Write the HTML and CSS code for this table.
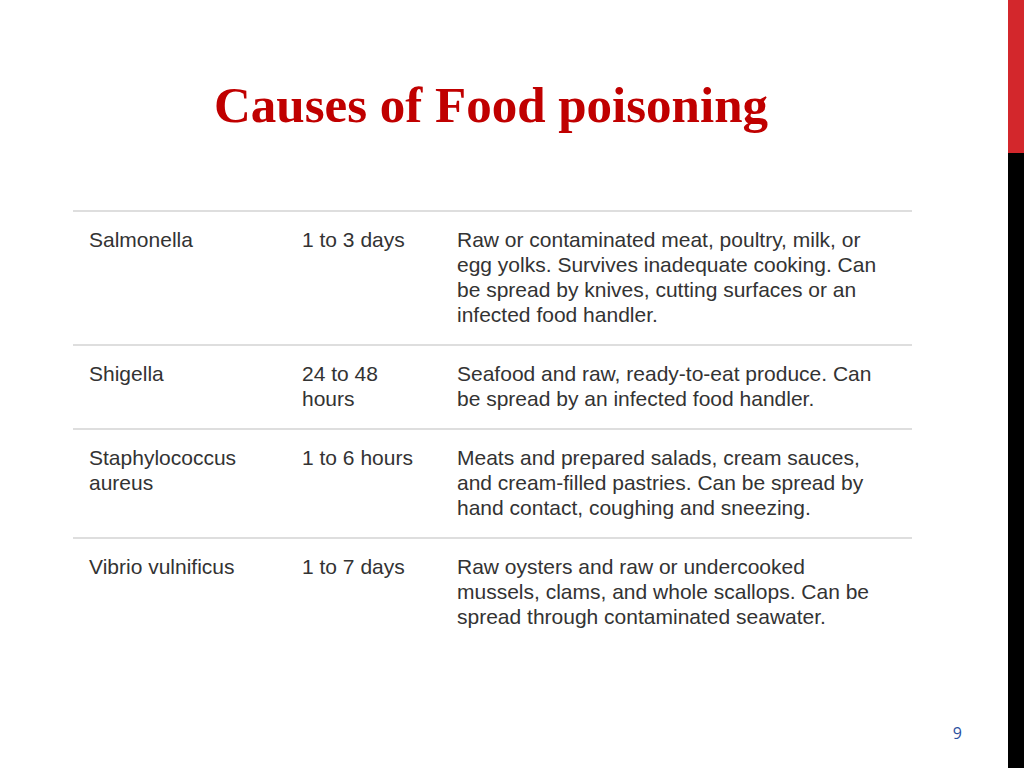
FILE: index.html
```
<!DOCTYPE html>
<html lang="en">
<head>
<meta charset="utf-8">
<title>Causes of Food poisoning</title>
<link rel="stylesheet" href="styles.css">
</head>
<body>
<div class="slide">
  <main class="content">
    <h1 class="title">Causes of Food poisoning</h1>
    <table class="causes">
      <tbody>
        <tr>
          <td class="c1">Salmonella</td>
          <td class="c2">1 to 3 days</td>
          <td class="c3">Raw or contaminated meat, poultry, milk, or egg yolks. Survives inadequate cooking. Can be spread by knives, cutting surfaces or an infected food handler.</td>
        </tr>
        <tr>
          <td class="c1">Shigella</td>
          <td class="c2">24 to 48 hours</td>
          <td class="c3">Seafood and raw, ready-to-eat produce. Can be spread by an infected food handler.</td>
        </tr>
        <tr>
          <td class="c1">Staphylococcus aureus</td>
          <td class="c2">1 to 6 hours</td>
          <td class="c3">Meats and prepared salads, cream sauces, and cream-filled pastries. Can be spread by hand contact, coughing and sneezing.</td>
        </tr>
        <tr class="last">
          <td class="c1">Vibrio vulnificus</td>
          <td class="c2">1 to 7 days</td>
          <td class="c3">Raw oysters and raw or undercooked mussels, clams, and whole scallops. Can be spread through contaminated seawater.</td>
        </tr>
      </tbody>
    </table>
    <div class="footer"><span class="page-num">9</span></div>
  </main>
  <aside class="edge">
    <div class="edge-red"></div>
    <div class="edge-black"></div>
  </aside>
</div>
</body>
</html>
```
FILE: styles.css
```
html, body {
  margin: 0;
  padding: 0;
  background: #ffffff;
}
.slide {
  width: 1024px;
  height: 768px;
  display: flex;
  overflow: hidden;
}
.content {
  flex: 1;
  display: flex;
  flex-direction: column;
  padding: 73px 0 0 73px;
}
.title {
  margin: 0;
  padding-right: 99px;
  text-align: center;
  font-family: "Liberation Serif", "Times New Roman", serif;
  font-weight: bold;
  font-size: 51px;
  line-height: 64px;
  color: #c00000;
  height: 64px;
}
.causes {
  margin-top: 73px;
  width: 839px;
  border-collapse: collapse;
  font-family: "Liberation Sans", Arial, sans-serif;
  font-size: 21px;
  line-height: 25px;
  color: #333333;
  table-layout: fixed;
}
.causes tr {
  border-top: 2px solid #dedede;
}
.causes td {
  vertical-align: top;
  padding: 15px 16px 17px 16px;
}
.causes td.c3 {
  padding-right: 20px;
}
.c1 { width: 181px; }
.c2 { width: 123px; }
.footer {
  flex: 1;
  display: flex;
  justify-content: flex-end;
  align-items: flex-end;
  padding: 0 46px 26px 0;
}
.page-num {
  font-family: "Open Sans", "Liberation Sans", sans-serif;
  font-size: 16px;
  color: #2b50a0;
  line-height: 18px;
}
.edge {
  width: 16px;
  display: flex;
  flex-direction: column;
}
.edge-red {
  height: 153px;
  background: #d3272c;
}
.edge-black {
  flex: 1;
  background: #000000;
}
```
